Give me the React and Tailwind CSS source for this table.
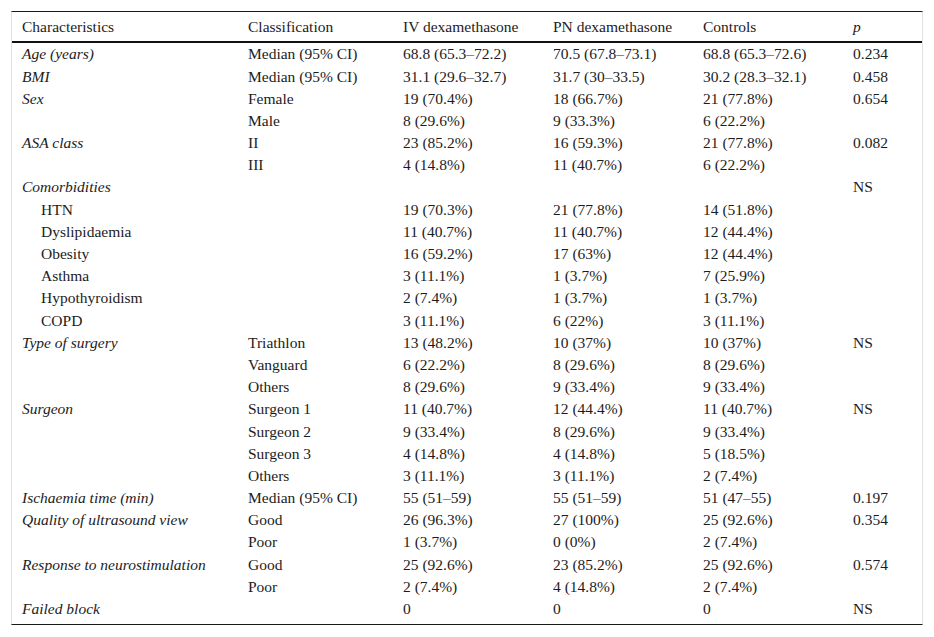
import React from "react";

const COLS = "grid grid-cols-[226px_155px_150px_150px_150px_79px]";

const ROWS = [
  { label: "Age (years)", kind: "group", cls: "Median (95% CI)", iv: "68.8 (65.3–72.2)", pn: "70.5 (67.8–73.1)", ctl: "68.8 (65.3–72.6)", p: "0.234" },
  { label: "BMI", kind: "group", cls: "Median (95% CI)", iv: "31.1 (29.6–32.7)", pn: "31.7 (30–33.5)", ctl: "30.2 (28.3–32.1)", p: "0.458" },
  { label: "Sex", kind: "group", cls: "Female", iv: "19 (70.4%)", pn: "18 (66.7%)", ctl: "21 (77.8%)", p: "0.654" },
  { label: "", cls: "Male", iv: "8 (29.6%)", pn: "9 (33.3%)", ctl: "6 (22.2%)", p: "" },
  { label: "ASA class", kind: "group", cls: "II", iv: "23 (85.2%)", pn: "16 (59.3%)", ctl: "21 (77.8%)", p: "0.082" },
  { label: "", cls: "III", iv: "4 (14.8%)", pn: "11 (40.7%)", ctl: "6 (22.2%)", p: "" },
  { label: "Comorbidities", kind: "group", cls: "", iv: "", pn: "", ctl: "", p: "NS" },
  { label: "HTN", kind: "sub", cls: "", iv: "19 (70.3%)", pn: "21 (77.8%)", ctl: "14 (51.8%)", p: "" },
  { label: "Dyslipidaemia", kind: "sub", cls: "", iv: "11 (40.7%)", pn: "11 (40.7%)", ctl: "12 (44.4%)", p: "" },
  { label: "Obesity", kind: "sub", cls: "", iv: "16 (59.2%)", pn: "17 (63%)", ctl: "12 (44.4%)", p: "" },
  { label: "Asthma", kind: "sub", cls: "", iv: "3 (11.1%)", pn: "1 (3.7%)", ctl: "7 (25.9%)", p: "" },
  { label: "Hypothyroidism", kind: "sub", cls: "", iv: "2 (7.4%)", pn: "1 (3.7%)", ctl: "1 (3.7%)", p: "" },
  { label: "COPD", kind: "sub", cls: "", iv: "3 (11.1%)", pn: "6 (22%)", ctl: "3 (11.1%)", p: "" },
  { label: "Type of surgery", kind: "group", cls: "Triathlon", iv: "13 (48.2%)", pn: "10 (37%)", ctl: "10 (37%)", p: "NS" },
  { label: "", cls: "Vanguard", iv: "6 (22.2%)", pn: "8 (29.6%)", ctl: "8 (29.6%)", p: "" },
  { label: "", cls: "Others", iv: "8 (29.6%)", pn: "9 (33.4%)", ctl: "9 (33.4%)", p: "" },
  { label: "Surgeon", kind: "group", cls: "Surgeon 1", iv: "11 (40.7%)", pn: "12 (44.4%)", ctl: "11 (40.7%)", p: "NS" },
  { label: "", cls: "Surgeon 2", iv: "9 (33.4%)", pn: "8 (29.6%)", ctl: "9 (33.4%)", p: "" },
  { label: "", cls: "Surgeon 3", iv: "4 (14.8%)", pn: "4 (14.8%)", ctl: "5 (18.5%)", p: "" },
  { label: "", cls: "Others", iv: "3 (11.1%)", pn: "3 (11.1%)", ctl: "2 (7.4%)", p: "" },
  { label: "Ischaemia time (min)", kind: "group", cls: "Median (95% CI)", iv: "55 (51–59)", pn: "55 (51–59)", ctl: "51 (47–55)", p: "0.197" },
  { label: "Quality of ultrasound view", kind: "group", cls: "Good", iv: "26 (96.3%)", pn: "27 (100%)", ctl: "25 (92.6%)", p: "0.354" },
  { label: "", cls: "Poor", iv: "1 (3.7%)", pn: "0 (0%)", ctl: "2 (7.4%)", p: "" },
  { label: "Response to neurostimulation", kind: "group", cls: "Good", iv: "25 (92.6%)", pn: "23 (85.2%)", ctl: "25 (92.6%)", p: "0.574" },
  { label: "", cls: "Poor", iv: "2 (7.4%)", pn: "4 (14.8%)", ctl: "2 (7.4%)", p: "" },
  { label: "Failed block", kind: "group", cls: "", iv: "0", pn: "0", ctl: "0", p: "NS" },
];

const Cell = ({ children, className = "" }) => (
  <div className={`pl-[10px] whitespace-nowrap ${className}`}>{children}</div>
);

export default function App() {
  return (
    <div className="bg-white w-[934px] h-[637px] pt-[11px] pl-[11px] [font-family:'Liberation_Serif',serif] text-[15.5px] text-[#1c1c1c]">
      <div className="w-[912px] border-t border-t-[#1a1a1a] border-b border-b-[#1a1a1a] border-x border-x-[#e2e2e2] pb-[4px]">
        <div className={`${COLS} h-[31px] items-center border-b-2 border-b-[#111]`}>
          <Cell className="pl-[9px]">Characteristics</Cell>
          <Cell>Classification</Cell>
          <Cell>IV dexamethasone</Cell>
          <Cell>PN dexamethasone</Cell>
          <Cell>Controls</Cell>
          <Cell className="italic">p</Cell>
        </div>
        {ROWS.map((r, i) => (
          <div key={i} className={`${COLS} h-[22.2px] items-center leading-none`}>
            <Cell
              className={
                r.kind === "sub" ? "pl-[29px]" : r.kind === "group" ? "pl-[9px] italic" : "pl-[9px]"
              }
            >
              {r.label}
            </Cell>
            <Cell>{r.cls}</Cell>
            <Cell>{r.iv}</Cell>
            <Cell>{r.pn}</Cell>
            <Cell>{r.ctl}</Cell>
            <Cell>{r.p}</Cell>
          </div>
        ))}
      </div>
    </div>
  );
}
